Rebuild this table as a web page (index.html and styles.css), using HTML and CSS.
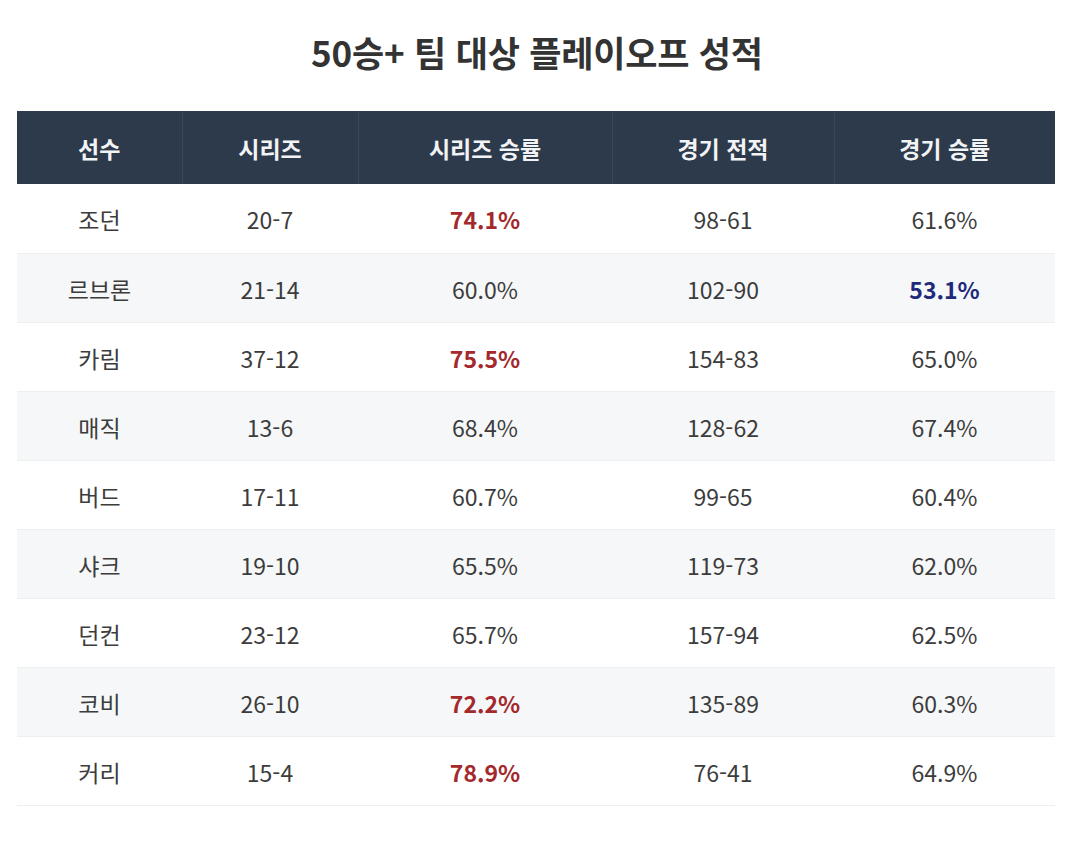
FILE: index.html
```html
<!DOCTYPE html>
<html lang="ko">
<head>
<meta charset="utf-8">
<link rel="stylesheet" href="styles.css">
</head>
<body>
<div class="page">
  <h1 class="title">50승+ 팀 대상 플레이오프 성적</h1>
  <table class="stats">
    <colgroup>
      <col class="c1"><col class="c2"><col class="c3"><col class="c4"><col class="c5">
    </colgroup>
    <thead>
      <tr><th>선수</th><th>시리즈</th><th>시리즈 승률</th><th>경기 전적</th><th>경기 승률</th></tr>
    </thead>
    <tbody>
      <tr><td>조던</td><td>20-7</td><td class="red">74.1%</td><td>98-61</td><td>61.6%</td></tr>
      <tr><td>르브론</td><td>21-14</td><td>60.0%</td><td>102-90</td><td class="blue">53.1%</td></tr>
      <tr><td>카림</td><td>37-12</td><td class="red">75.5%</td><td>154-83</td><td>65.0%</td></tr>
      <tr><td>매직</td><td>13-6</td><td>68.4%</td><td>128-62</td><td>67.4%</td></tr>
      <tr><td>버드</td><td>17-11</td><td>60.7%</td><td>99-65</td><td>60.4%</td></tr>
      <tr><td>샤크</td><td>19-10</td><td>65.5%</td><td>119-73</td><td>62.0%</td></tr>
      <tr><td>던컨</td><td>23-12</td><td>65.7%</td><td>157-94</td><td>62.5%</td></tr>
      <tr><td>코비</td><td>26-10</td><td class="red">72.2%</td><td>135-89</td><td>60.3%</td></tr>
      <tr><td>커리</td><td>15-4</td><td class="red">78.9%</td><td>76-41</td><td>64.9%</td></tr>
    </tbody>
  </table>
</div>
</body>
</html>
```

FILE: styles.css
```css
html, body {
  margin: 0;
  padding: 0;
  background: #ffffff;
}
body {
  font-family: "Noto Sans CJK KR", "Noto Sans", sans-serif;
  color: #3a3a3a;
}
.page {
  padding: 32px 25px 0 17px;
}
.title {
  margin: 0 0 39px 0;
  font-size: 35px;
  line-height: 40px;
  font-weight: 700;
  text-align: center;
  color: #333333;
  padding-left: 2px;
  letter-spacing: -0.2px;
}
.stats {
  width: 1038px;
  border-collapse: collapse;
  table-layout: fixed;
}
.c1 { width: 165px; }
.c2 { width: 176px; }
.c3 { width: 254px; }
.c4 { width: 222px; }
.c5 { width: 221px; }
.stats th {
  background: #2d3a4b;
  color: #f2f3f5;
  font-size: 23px;
  font-weight: 700;
  height: 73px;
  padding: 0;
  text-align: center;
  border-left: 1px solid #3a4758;
}
.stats th:first-child {
  border-left: none;
}
.stats td {
  height: 69.1px;
  padding: 2px 0 0 0;
  box-sizing: border-box;
  text-align: center;
  font-size: 23px;
  font-weight: 400;
  color: #3c3c3c;
  border-bottom: 1px solid #eeeff1;
}
.stats tbody tr:nth-child(even) td {
  background: #f6f7f8;
}
.stats td.red {
  color: #a3292d;
  font-weight: 700;
}
.stats td.blue {
  color: #1f2a7a;
  font-weight: 700;
}
```
